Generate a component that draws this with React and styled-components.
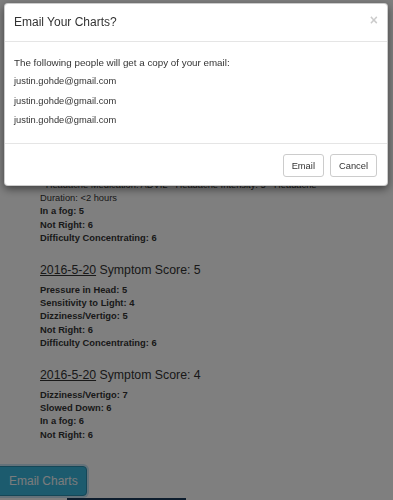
import React from 'react';
import styled, { createGlobalStyle } from 'styled-components';

const GlobalStyle = createGlobalStyle`
  html, body {
    margin: 0;
    padding: 0;
    background: #fff;
    font-family: "Liberation Sans", Arial, Helvetica, sans-serif;
    color: #333;
  }
`;

const Page = styled.div`
  width: 393px;
  height: 500px;
  overflow: hidden;
  background: #fff;
`;

const Content = styled.div`
  padding: 179px 40px 0;
`;

const Line = styled.div`
  font-size: 9.33px;
  line-height: 13.2px;
  font-weight: ${(p) => (p.bold ? 700 : 400)};
  white-space: nowrap;
`;

const EntryTitle = styled.h4`
  margin: 17px 0 5px;
  font-size: 12.3px;
  line-height: 17px;
  font-weight: 400;
`;

const DateLink = styled.a`
  color: #333;
  text-decoration: underline;
`;

const EmailChartsButton = styled.button`
  display: block;
  margin: 24px 0 0 -4px;
  height: 30px;
  width: 91px;
  padding: 0 0 0 12px;
  text-align: left;
  font-family: inherit;
  font-size: 12px;
  color: #f4f8fa;
  background: #39b6dc;
  border: 1px solid #2a8fae;
  border-radius: 4px;
  box-shadow: 0 0 0 2px #c8e4f4;
`;

const Footer = styled.div`
  margin-top: 2px;
  display: flex;
  align-items: flex-start;
  height: 20px;
  background: #fff;
`;

const MapBlock = styled.div`
  margin-left: 67px;
  width: 119px;
  height: 20px;
  background: #1b3a5a;
`;

const Address = styled.div`
  margin-left: 44px;
  font-size: 9.33px;
  line-height: 13px;
  color: #333;
  padding-top: 1px;
`;

const Backdrop = styled.div`
  position: fixed;
  inset: 0;
  background: rgba(0, 0, 0, 0.5);
`;

const Dialog = styled.div`
  position: absolute;
  top: 3px;
  left: 4px;
  width: 384px;
  background: #fff;
  border: 1px solid rgba(0, 0, 0, 0.2);
  border-radius: 4px;
  box-shadow: 0 3px 9px rgba(0, 0, 0, 0.5);
  box-sizing: border-box;
`;

const Header = styled.div`
  display: flex;
  justify-content: space-between;
  align-items: center;
  padding: 10px 9px;
  border-bottom: 1px solid #e5e5e5;
`;

const Title = styled.h4`
  margin: 0;
  font-size: 12px;
  line-height: 17px;
  font-weight: 400;
  color: #333;
`;

const Close = styled.button`
  margin-top: -5px;
  padding: 0;
  border: 0;
  background: none;
  font-family: inherit;
  font-size: 14px;
  font-weight: 700;
  line-height: 1;
  color: #000;
  opacity: 0.2;
`;

const Body = styled.div`
  padding: 14px 9px 10px;
`;

const BodyLine = styled.p`
  margin: 0 0 6.3px;
  font-size: ${(p) => (p.lead ? '9.8px' : '9.33px')};
  line-height: 13px;
  color: #333;
`;

const ModalFooter = styled.div`
  display: flex;
  justify-content: flex-end;
  gap: 6px;
  padding: 10px 10px 8px;
  border-top: 1px solid #e5e5e5;
`;

const Button = styled.button`
  height: 23px;
  padding: 0 8px;
  font-family: inherit;
  font-size: 9.33px;
  color: #333;
  background: #fff;
  border: 1px solid #ccc;
  border-radius: 3px;
`;

const entries = [
  {
    lines: [
      { text: '\u201C Headache Medication: ADVIL  \u201C Headache Intensity: 5  \u201C Headache' },
      { text: 'Duration: <2 hours' },
      { text: 'In a fog: 5', bold: true },
      { text: 'Not Right: 6', bold: true },
      { text: 'Difficulty Concentrating: 6', bold: true },
    ],
  },
  {
    date: '2016-5-20',
    score: 5,
    lines: [
      { text: 'Pressure in Head: 5', bold: true },
      { text: 'Sensitivity to Light: 4', bold: true },
      { text: 'Dizziness/Vertigo: 5', bold: true },
      { text: 'Not Right: 6', bold: true },
      { text: 'Difficulty Concentrating: 6', bold: true },
    ],
  },
  {
    date: '2016-5-20',
    score: 4,
    lines: [
      { text: 'Dizziness/Vertigo: 7', bold: true },
      { text: 'Slowed Down: 6', bold: true },
      { text: 'In a fog: 6', bold: true },
      { text: 'Not Right: 6', bold: true },
    ],
  },
];

const recipients = ['justin.gohde@gmail.com', 'justin.gohde@gmail.com', 'justin.gohde@gmail.com'];

const App = () => {
  return (
    <Page>
      <GlobalStyle />
      <Content>
        {entries.map((entry, i) => (
          <div key={i}>
            {entry.date && (
              <EntryTitle>
                <DateLink>{entry.date}</DateLink> Symptom Score: {entry.score}
              </EntryTitle>
            )}
            {entry.lines.map((l, j) => (
              <Line key={j} bold={l.bold}>{l.text}</Line>
            ))}
          </div>
        ))}
      </Content>
      <EmailChartsButton>Email Charts</EmailChartsButton>
      <Footer>
        <MapBlock />
        <Address>333 East 59th St</Address>
      </Footer>
      <Backdrop>
        <Dialog>
          <Header>
            <Title>Email Your Charts?</Title>
            <Close>×</Close>
          </Header>
          <Body>
            <BodyLine lead>The following people will get a copy of your email:</BodyLine>
            {recipients.map((r, i) => (
              <BodyLine key={i}>{r}</BodyLine>
            ))}
          </Body>
          <ModalFooter>
            <Button>Email</Button>
            <Button>Cancel</Button>
          </ModalFooter>
        </Dialog>
      </Backdrop>
    </Page>
  );
};

export default App;
